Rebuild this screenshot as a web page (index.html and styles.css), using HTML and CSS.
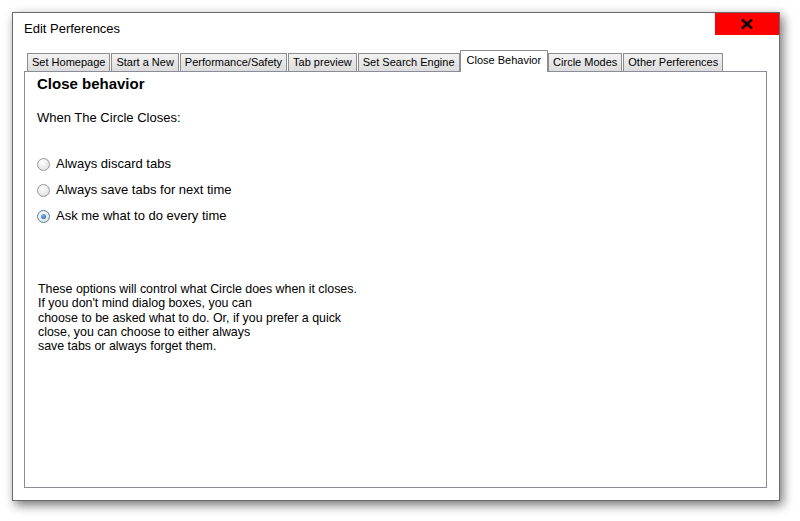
FILE: index.html
```html
<!DOCTYPE html>
<html>
<head>
<meta charset="utf-8">
<link rel="stylesheet" href="styles.css">
</head>
<body>
<div class="window">
  <div class="titlebar">
    <div class="title">Edit Perferences</div>
    <div class="close">
      <svg width="12" height="10" viewBox="0 0 12 10"><path d="M1 0.5 L11 9.5 M11 0.5 L1 9.5" stroke="#000" stroke-width="2.4"/></svg>
    </div>
  </div>
  <div class="body">
    <div class="tabs">
      <div class="tab">Set Homepage</div>
      <div class="tab">Start a New</div>
      <div class="tab">Performance/Safety</div>
      <div class="tab">Tab preview</div>
      <div class="tab">Set Search Engine</div>
      <div class="tab active">Close Behavior</div>
      <div class="tab">Circle Modes</div>
      <div class="tab">Other Perferences</div>
    </div>
    <div class="panel">
      <h1 class="heading">Close behavior</h1>
      <p class="sub">When The Circle Closes:</p>
      <div class="options">
        <label class="option"><span class="radio"></span>Always discard tabs</label>
        <label class="option"><span class="radio"></span>Always save tabs for next time</label>
        <label class="option"><span class="radio checked"></span>Ask me what to do every time</label>
      </div>
      <p class="desc">These options will control what Circle does when it closes.<br>If you don't mind dialog boxes, you can<br>choose to be asked what to do. Or, if you prefer a quick<br>close, you can choose to either always<br>save tabs or always forget them.</p>
    </div>
  </div>
</div>
</body>
</html>
```
FILE: styles.css
```css
html, body {
  margin: 0;
  padding: 0;
  background: #ffffff;
}
body {
  width: 800px;
  height: 521px;
  overflow: hidden;
}
.window {
  margin: 12px 0 0 12px;
  width: 766px;
  height: 487px;
  border: 1px solid #6a6a6a;
  background: #ffffff;
  box-shadow: 3px 4px 10px rgba(0, 0, 0, 0.55);
  display: flex;
  flex-direction: column;
}
.titlebar {
  height: 22px;
  display: flex;
  justify-content: space-between;
}
.title {
  padding: 8px 0 0 11px;
  font-family: "Liberation Sans", Arial, sans-serif;
  font-size: 13px;
  color: #000;
}
.close {
  width: 64px;
  height: 22px;
  background: #ff0000;
  display: flex;
  align-items: center;
  justify-content: center;
}
.body {
  flex: 1;
  padding: 15px 12px 12px 11px;
  display: flex;
  flex-direction: column;
}
.tabs {
  display: flex;
  align-items: flex-end;
  height: 21px;
  padding-left: 3px;
  position: relative;
  z-index: 1;
}
.tab {
  height: 17px;
  line-height: 17px;
  padding: 0 4px;
  margin-right: 1px;
  border: 1px solid #8d8d8d;
  border-bottom: none;
  background: linear-gradient(#f2f2f2, #dcdcdc);
  font-family: "Liberation Sans", Arial, sans-serif;
  font-size: 11px;
  color: #000;
  white-space: nowrap;
}
.tab.active {
  height: 21px;
  line-height: 18px;
  background: #ffffff;
  border-color: #8d8d8d;
  margin-left: -1px;
  margin-right: 0;
  padding: 0 6px;
  margin-bottom: -1px;
}
.panel {
  flex: 1;
  border: 1px solid #8b8d96;
  background: #fff;
  padding: 0 12px;
  font-family: "Liberation Sans", Arial, sans-serif;
  color: #000;
}
.heading {
  margin: 3px 0 0 0;
  font-size: 15px;
  font-weight: bold;
  line-height: 18px;
}
.sub {
  margin: 17px 0 0 0;
  font-size: 13px;
  line-height: 16px;
}
.options {
  margin-top: 30px;
  display: flex;
  flex-direction: column;
  gap: 10px;
}
.option {
  display: flex;
  align-items: center;
  font-size: 13px;
  line-height: 16px;
  height: 16px;
}
.radio {
  width: 11px;
  height: 11px;
  border-radius: 50%;
  border: 1px solid #9a9a9a;
  background: radial-gradient(circle at 40% 35%, #ffffff, #d6d6d6);
  margin-right: 6px;
  position: relative;
}
.radio.checked {
  border-color: #5a7fa8;
}
.radio.checked::after {
  content: "";
  position: absolute;
  left: 3px;
  top: 3px;
  width: 5px;
  height: 5px;
  border-radius: 50%;
  background: radial-gradient(circle at 40% 35%, #7cc0ff, #0f4f95);
}
.desc {
  margin: 58px 0 0 1px;
  font-size: 12.4px;
  line-height: 14.3px;
}
```
